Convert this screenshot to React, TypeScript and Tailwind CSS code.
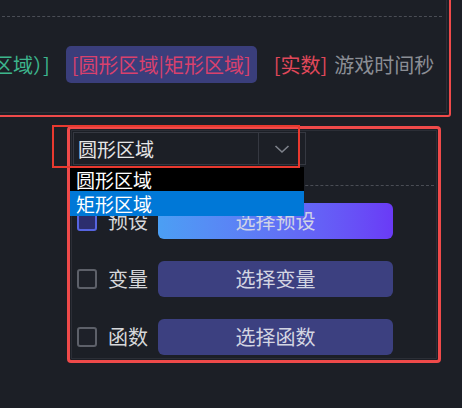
import React from "react";

const font = { fontFamily: '"Noto Sans CJK SC", "Noto Sans", sans-serif' };

const Row = ({
  label,
  action,
  checked,
  primary,
}: {
  label: string;
  action: string;
  checked?: boolean;
  primary?: boolean;
}) => (
  <div className="flex items-center h-[36px]">
    <div
      className={
        checked
          ? "w-[20px] h-[20px] rounded-[3px] border-2 border-[#5664e0] bg-[#2c2e6e]"
          : "w-[20px] h-[20px] rounded-[3px] border-2 border-[#5d6069] bg-[#1e2129]"
      }
    />
    <span className="ml-[11px] w-[50px] text-[20px] leading-none text-[#d6d7da]">{label}</span>
    <button
      className={
        primary
          ? "w-[235px] h-[36px] rounded-[6px] bg-gradient-to-r from-[#4b9ff4] to-[#6a3af6] text-[20px] text-[#cfd3e6]"
          : "w-[235px] h-[36px] rounded-[6px] bg-[#3c4080] text-[20px] text-[#d3d5e2]"
      }
    >
      {action}
    </button>
  </div>
);

export default function App() {
  return (
    <div className="w-[462px] h-[408px] bg-[#1c1f26] overflow-hidden relative" style={font}>
      {/* top panel, cut by the window */}
      <div className="-ml-[12px] -mt-[12px] w-[463px] h-[129px] border-2 border-[#ef4a4a] rounded-[3px] p-[2px]">
        <div className="h-full border border-[#2b2e36] flex flex-col">
          <div className="mt-[23px] mx-[4px] border-t border-dashed border-[#4a4d55]" />
          <div className="flex items-center mt-[29px] text-[20px] leading-none">
            <span className="ml-[0px] text-[#3db58d]">区域）]</span>
            <span className="ml-[16px] h-[37px] px-[6px] flex items-center rounded-[5px] bg-[#3a3e7b] text-[#d9416d]">
              [圆形区域|矩形区域]
            </span>
            <span className="ml-[17px] text-[#e0485a]">[实数]</span>
            <span className="ml-[7px] text-[#8b8e95]">游戏时间秒</span>
          </div>
        </div>
      </div>

      {/* bottom panel */}
      <div className="ml-[67px] mt-[9px] w-[374px] h-[237px] border-[3px] border-[#ef4a4a] rounded-[4px] p-[1px]">
        <div className="h-full border border-[#2b2e36] flex flex-col">
          <div className="ml-[1px] mt-[1px] w-[233px] h-[33px] border border-[#353841] flex items-center">
            <span className="flex-1 pl-[4px] text-[19px] leading-none text-[#e6e6e6]">圆形区域</span>
            <div className="w-[47px] h-full border-l border-[#353841] flex items-center justify-center">
              <svg width="16" height="10" viewBox="0 0 16 10" fill="none">
                <path d="M1.5 2 L8 8 L14.5 2" stroke="#7e828b" strokeWidth="1.6" />
              </svg>
            </div>
          </div>
          <div className="mt-[20px] mx-[2px] border-t border-dashed border-[#4a4d55]" />
          <div className="flex flex-col gap-[22px] mt-[17px] pl-[5px]">
            <Row label="预设" action="选择预设" checked primary />
            <Row label="变量" action="选择变量" />
            <Row label="函数" action="选择函数" />
          </div>
        </div>
      </div>

      {/* dropdown list */}
      <div className="absolute left-[70px] top-[167px] w-[234px] flex flex-col text-[19px] leading-none">
        <div className="h-[24px] bg-black text-white flex items-center pl-[6px]">圆形区域</div>
        <div className="h-[25px] bg-[#0078d7] text-white flex items-center pl-[6px]">矩形区域</div>
      </div>

      {/* annotation outline */}
      <div className="absolute left-[52px] top-[125px] w-[248px] h-[43px] border-2 border-[#e8392f]" />
    </div>
  );
}
